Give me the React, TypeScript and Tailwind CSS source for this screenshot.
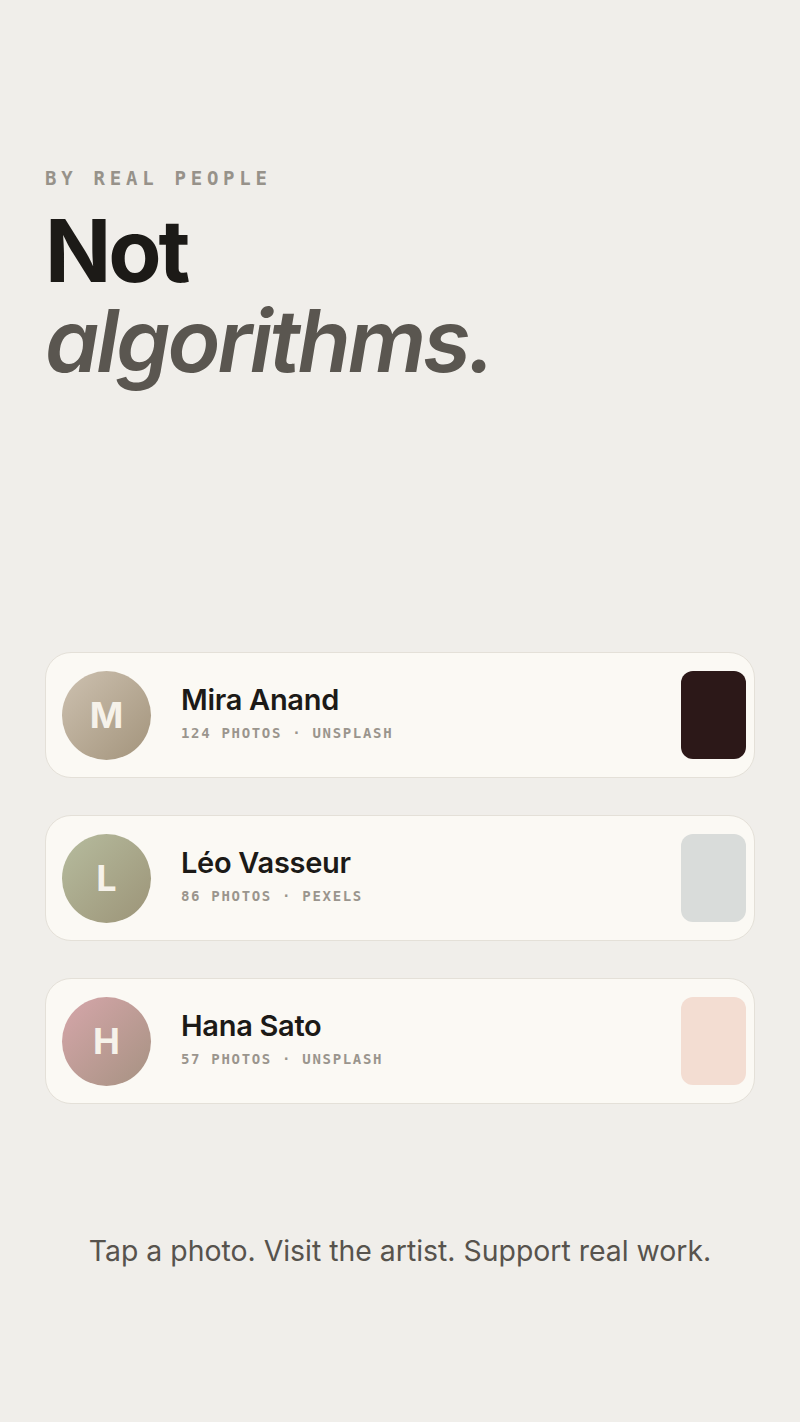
import * as React from 'react';

const artists = [
  {
    initial: 'M',
    name: 'Mira Anand',
    meta: '124 PHOTOS · UNSPLASH',
    avatar: 'bg-gradient-to-br from-[#cdc1b0] to-[#a3947c]',
    thumb: 'bg-[#2c1818]',
  },
  {
    initial: 'L',
    name: 'Léo Vasseur',
    meta: '86 PHOTOS · PEXELS',
    avatar: 'bg-gradient-to-br from-[#b6bc9e] to-[#9c9478]',
    thumb: 'bg-[#d9dcda]',
  },
  {
    initial: 'H',
    name: 'Hana Sato',
    meta: '57 PHOTOS · UNSPLASH',
    avatar: 'bg-gradient-to-br from-[#d6a6aa] to-[#a69282]',
    thumb: 'bg-[#f3ddd2]',
  },
];

function ArtistCard({ artist }: { artist: (typeof artists)[number] }) {
  return (
    <div className="flex items-center h-[126px] rounded-[26px] border border-[#e4e0d8] bg-[#fbf9f4] pl-[16px] pr-[8px]">
      <div
        className={`flex items-center justify-center w-[89px] h-[89px] rounded-full shrink-0 ${artist.avatar}`}
      >
        <span className="text-[36px] font-bold text-[#f6f2ea] font-['Inter',sans-serif]">
          {artist.initial}
        </span>
      </div>
      <div className="flex flex-col ml-[30px] flex-1 -mt-[4px]">
        <div className="text-[29px] leading-[34px] font-semibold tracking-[-0.01em] text-[#1c1a17] font-['Inter',sans-serif]">
          {artist.name}
        </div>
        <div className="mt-[6px] text-[14px] font-bold tracking-[0.12em] text-[#9a958d] font-['DejaVu_Sans_Mono',monospace]">
          {artist.meta}
        </div>
      </div>
      <div className={`w-[65px] h-[88px] rounded-[12px] shrink-0 ${artist.thumb}`} />
    </div>
  );
}

export default function App() {
  return (
    <div className="min-h-[1422px] bg-[#f0eeea] px-[45px] flex flex-col">
      <div className="pt-[166px] text-[19px] leading-[24px] font-bold tracking-[0.25em] text-[#97928a] font-['DejaVu_Sans_Mono',monospace]">
        BY REAL PEOPLE
      </div>
      <h1 className="mt-[16px] text-[87px] leading-[90px] font-bold tracking-[-0.035em] text-[#1c1a17] font-['Inter',sans-serif]">
        Not
        <br />
        <span className="italic font-semibold text-[#5a5650]">algorithms.</span>
      </h1>
      <div className="mt-[266px] flex flex-col gap-[37px]">
        {artists.map((a) => (
          <ArtistCard key={a.name} artist={a} />
        ))}
      </div>
      <p className="mt-[126px] text-center text-[28.4px] text-[#57534d] font-['Inter',sans-serif]">
        Tap a photo. Visit the artist. Support real work.
      </p>
    </div>
  );
}
